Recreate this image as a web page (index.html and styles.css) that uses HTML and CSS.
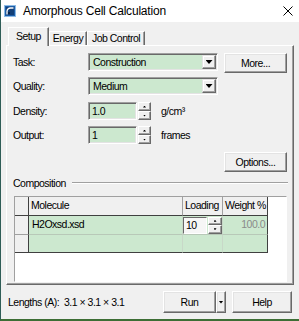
FILE: index.html
```html
<!DOCTYPE html>
<html lang="en">
<head>
  <meta charset="UTF-8">
  <title>Amorphous Cell Calculation</title>
  <link rel="stylesheet" href="styles.css">
</head>
<body>

<div class="window">
  <div class="titlebar">
    <svg class="app-icon" viewBox="0 0 12 12">
      <rect x="0.5" y="0.5" width="11" height="11" fill="#1d5ea8" stroke="#8dbbe6"/>
      <rect x="2" y="2" width="8" height="8" fill="#123f78"/>
      <path d="M3 9.5 V6.5 A3.5 3.5 0 0 1 6.5 3 H9.5" stroke="#fff" stroke-width="1.3" fill="none"/>
      <rect x="4" y="7" width="2" height="2" fill="#0a2446"/>
    </svg>
    <span class="title">Amorphous Cell Calculation</span>
    <svg class="close" viewBox="0 0 10 10">
      <path d="M0.5 0.5 L9.5 9.5 M9.5 0.5 L0.5 9.5" stroke="#000" stroke-width="1" fill="none"/>
    </svg>
  </div>

  <div class="tabs">
    <div class="tab active tab-setup">Setup</div>
    <div class="tab tab-energy">Energy</div>
    <div class="tab tab-job">Job Control</div>
  </div>

  <div class="panel">
    <div class="row row-task">
      <span class="lbl">Task:</span>
      <div class="field combo"><span class="val">Construction</span><span class="drop"></span></div>
      <button class="btn btn-side">More...</button>
    </div>
    <div class="row row-quality">
      <span class="lbl">Quality:</span>
      <div class="field combo"><span class="val">Medium</span><span class="drop"></span></div>
    </div>
    <div class="row row-density">
      <span class="lbl">Density:</span>
      <div class="field spin"><span class="val">1.0</span></div>
      <div class="spinner"><span class="up"></span><span class="down"></span></div>
      <span class="unit">g/cm³</span>
    </div>
    <div class="row row-output">
      <span class="lbl">Output:</span>
      <div class="field spin"><span class="val">1</span></div>
      <div class="spinner"><span class="up"></span><span class="down"></span></div>
      <span class="unit">frames</span>
    </div>
    <div class="row row-options">
      <button class="btn btn-side">Options...</button>
    </div>

    <div class="group-head">
      <span>Composition</span>
      <span class="rule"></span>
    </div>

    <div class="grid-box">
      <div class="grid">
        <div class="cell hc rh"></div>
        <div class="cell hc">Molecule</div>
        <div class="cell hc">Loading</div>
        <div class="cell hc last">Weight %</div>

        <div class="cell rh"></div>
        <div class="cell bc">H2Oxsd.xsd</div>
        <div class="cell bc load">
          <div class="mini-field">10</div>
          <div class="spinner mini"><span class="up"></span><span class="down"></span></div>
        </div>
        <div class="cell bc last num">100.0</div>

        <div class="cell rh end"></div>
        <div class="cell bc end"></div>
        <div class="cell bc end"></div>
        <div class="cell bc last end"></div>
      </div>
    </div>
  </div>

  <div class="footer">
    <span class="lengths">Lengths (A):&nbsp; 3.1 × 3.1 × 3.1</span>
    <button class="btn btn-run">Run</button>
    <button class="btn btn-drop"><span class="tri"></span></button>
    <button class="btn btn-help">Help</button>
  </div>
</div>

</body>
</html>
```

FILE: styles.css
```css
* { box-sizing: border-box; }
body { margin: 0; background: #f0f0f0; font-family: "Liberation Sans", Arial, sans-serif; font-size: 10.5px; letter-spacing: -0.5px; color: #000; }

.window { width: 299px; height: 321px; display: flex; flex-direction: column; background: #f0f0f0; border-left: 1px solid #2f5d57; border-bottom: 2px solid #3d6e35; }

/* title bar */
.titlebar { height: 22px; flex: none; display: flex; align-items: center; background: #fff; }
.app-icon { width: 12px; height: 12px; margin-left: 3px; }
.title { margin-left: 7px; font-size: 12px; letter-spacing: -0.2px; }
.close { width: 10px; height: 10px; margin-left: auto; margin-right: 6px; }

/* tabs */
.tabs { height: 23px; flex: none; display: flex; align-items: flex-end; padding-left: 7px; }
.tab { height: 14px; line-height: 13px; text-align: center; background: #f0f0f0; border: 1px solid; border-color: #fff #696969 transparent #fff; border-bottom: none; box-shadow: inset -1px 0 #a0a0a0; }
.tab.active { position: relative; z-index: 1; height: 19px; line-height: 17px; margin-bottom: -1px; }
.tab-setup { width: 41px; }
.tab-energy { width: 38px; }
.tab-job { width: 58px; }

/* main panel */
.panel { flex: none; width: 288px; height: 240px; margin-left: 5px; padding: 7px 5px 0 6px; display: flex; flex-direction: column; border: 1px solid; border-color: #fff #696969 #696969 #fff; box-shadow: inset -1px -1px #a0a0a0; }

.row { display: flex; align-items: flex-start; }
.row-quality { margin-top: 4px; }
.row-density { margin-top: 7px; }
.row-output { margin-top: 6px; }
.row-options { margin-top: 8px; padding-left: 211px; }
.lbl { width: 75px; height: 18px; line-height: 18px; }

.field { height: 18px; background: #cce8cf; border: 1px solid; border-color: #a0a0a0 #fff #fff #a0a0a0; box-shadow: inset 1px 1px #696969, inset -1px -1px #e3e3e3; display: flex; align-items: center; }
.field .val { flex: 1; padding-left: 3px; line-height: 14px; }
.combo { width: 130px; padding: 1px; }
.drop { width: 14px; height: 14px; display: flex; align-items: center; justify-content: center; background: #f0f0f0; border: 1px solid; border-color: #e3e3e3 #696969 #696969 #e3e3e3; box-shadow: inset -1px -1px #a0a0a0, inset 1px 1px #fff; }
.drop::after, .tri { content: ""; display: block; width: 7px; height: 4px; background: #000; clip-path: polygon(0 0, 100% 0, 50% 100%); }
.spin { width: 49px; }

.spinner { width: 13px; height: 18px; margin-left: 1px; display: flex; flex-direction: column; }
.spinner span { flex: 1; display: flex; align-items: center; justify-content: center; background: #f0f0f0; border: 1px solid; border-color: #fff #696969 #696969 #fff; box-shadow: inset -1px -1px #a0a0a0; }
.spinner .up::after, .spinner .down::after { content: ""; display: block; width: 3px; height: 2px; background: #000; }
.spinner .up::after { clip-path: polygon(50% 0, 100% 100%, 0 100%); }
.spinner .down::after { clip-path: polygon(0 0, 100% 0, 50% 100%); }
.unit { margin-left: 10px; line-height: 18px; }

.btn { font: inherit; letter-spacing: inherit; color: #000; padding: 0; background: #f0f0f0; border: 1px solid; border-color: #fff #696969 #696969 #fff; box-shadow: inset -1px -1px #a0a0a0, inset 1px 1px #e3e3e3; }
.btn-side { width: 63px; height: 20px; margin-left: 6px; }
.row-options .btn-side { margin-left: 0; }

/* composition group */
.group-head { display: flex; align-items: center; height: 12px; margin-top: 5px; }
.rule { flex: 1; height: 2px; margin-left: 6px; margin-right: 0; border-top: 1px solid #a0a0a0; border-bottom: 1px solid #fff; }

.grid-box { width: 273px; height: 86px; margin-top: 7px; margin-left: 1px; background: #fff; border: 1px solid; border-color: #a0a0a0 #fff #fff #a0a0a0; }
.grid { display: grid; grid-template-columns: 14px 154px 40px 45px; grid-template-rows: 19px 19px 18px; }
.cell { line-height: 17px; padding-left: 3px; white-space: nowrap; overflow: hidden; border-right: 1px solid #c8d8c8; border-bottom: 1px solid #b8c8b8; }
.hc { background: #f0f0f0; border-right-color: #a0a0a0; border-bottom-color: #404040; padding-left: 2px; }
.rh { background: #f0f0f0; border-right-color: #404040; border-bottom-color: #a0a0a0; }
.hc.rh { border-bottom-color: #404040; }
.bc { background: #cce8cf; }
.last { border-right-color: #404040; }
.end { border-bottom-color: #404040; }
.num { text-align: right; padding-right: 2px; color: #8a8a8a; }
.load { display: flex; align-items: center; padding-left: 0; }
.mini-field { width: 24px; height: 17px; line-height: 15px; padding-left: 2px; background: #f6f6f6; border: 1px solid; border-color: #696969 #fff #fff #696969; }
.spinner.mini { height: 17px; width: 14px; }

/* footer */
.footer { flex: 1; display: flex; align-items: center; padding-left: 7px; padding-right: 7px; }
.lengths { margin-right: auto; }
.btn-run { width: 53px; height: 22px; }
.btn-drop { width: 10px; height: 22px; display: flex; align-items: center; justify-content: center; }
.btn-drop .tri { width: 5px; height: 3px; }
.btn-help { width: 60px; height: 22px; margin-left: 6px; }
```
